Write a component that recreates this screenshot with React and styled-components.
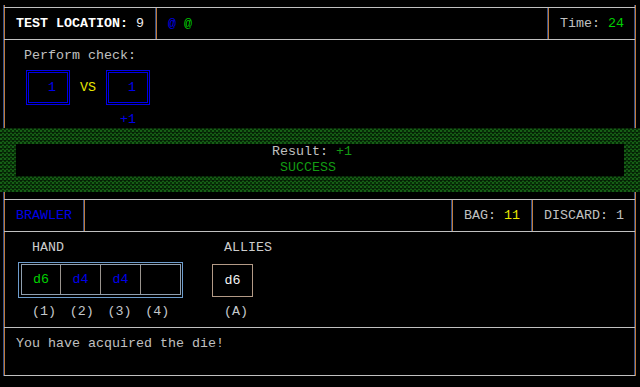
import React from "react";
import styled, { createGlobalStyle } from "styled-components";

const Global = createGlobalStyle`
  html, body { margin: 0; padding: 0; background: #000; }
  body { width: 640px; height: 387px; overflow: hidden; }
`;

const C = {
  text: "#c0c0c0",
  rule: "#c0c0c0",
  edgeBlue: "#2f4f88",
  edgeOrange: "#c07b3c",
  blue: "#0000e8",
  green: "#00d000",
  dimGreen: "#139a13",
  yellow: "#e8e800",
  white: "#f4f4f4",
};

const Screen = styled.div`
  width: 640px;
  height: 387px;
  background: #000;
  color: ${C.text};
  font-family: "Liberation Mono", "DejaVu Sans Mono", monospace;
  font-size: 13.333px;
  line-height: 16px;
  display: flex;
  flex-direction: column;
`;

const Frame = styled.section`
  margin: ${(p) => (p.$top ? "5px 4px 0 3px" : "0 4px 0 3px")};
  padding-top: ${(p) => (p.$top ? "2px" : "7px")};
  border-left: 1px solid ${C.edgeBlue};
  border-right: 1px solid ${C.edgeOrange};
  box-shadow: inset 1px 0 0 ${C.edgeOrange}, inset -1px 0 0 ${C.edgeBlue};
  display: flex;
  flex-direction: column;
`;

const Bar = styled.div`
  display: flex;
  height: 33px;
  box-sizing: border-box;
  border-top: 1px solid ${C.rule};
  border-bottom: 1px solid ${C.rule};
`;

const Cell = styled.div`
  display: flex;
  align-items: center;
  padding: 0 11px 0 12px;
  flex: ${(p) => (p.$grow ? 1 : "none")};
  white-space: pre;
  ${(p) =>
    p.$sep
      ? `border-left: 1px solid ${C.edgeBlue}; box-shadow: inset 1px 0 0 ${C.edgeOrange};`
      : ""}
`;

const Tint = styled.span`
  color: ${(p) => p.$c};
  font-weight: ${(p) => (p.$bold ? "bold" : "normal")};
`;

const CheckArea = styled.div`
  height: 88px;
  box-sizing: border-box;
  padding: 8px 0 0 20px;
  display: flex;
  flex-direction: column;
  gap: 6px;
`;

const CheckRow = styled.div`
  display: flex;
  align-items: flex-start;
  margin-left: 2px;
`;

const DieBox = styled.div`
  width: 44px;
  height: 35px;
  box-sizing: border-box;
  border: 3px double ${C.blue};
  color: ${C.blue};
  text-align: right;
  padding-right: 11px;
  line-height: 29px;
`;

const Versus = styled.div`
  margin: 0 10px;
  line-height: 35px;
  color: ${C.yellow};
`;

const Stack = styled.div`
  display: flex;
  flex-direction: column;
  gap: 7px;
`;

const Bonus = styled.div`
  text-align: right;
  padding-right: 14px;
  color: ${C.blue};
`;

const Band = styled.div`
  height: 64px;
  box-sizing: border-box;
  padding: 16px;
  background-color: #063006;
  background-image: repeating-linear-gradient(
      to bottom,
      rgba(0, 0, 0, 0.45) 0 1px,
      transparent 1px 4px
    ),
    conic-gradient(#165e16 25%, transparent 0 50%, #165e16 0 75%, transparent 0);
  background-size: auto, 4px 4px;
`;

const ResultBox = styled.div`
  height: 32px;
  background: #000;
  padding-right: 16px;
  text-align: center;
  white-space: pre;
`;

const Line = styled.div`
  height: 16px;
  color: ${(p) => p.$c || C.text};
`;

const Body = styled.div`
  height: 95px;
  box-sizing: border-box;
  padding: 8px 0 0 14px;
  display: grid;
  grid-template-columns: 165px 41px;
  grid-template-rows: 16px 36px 16px;
  column-gap: 29px;
  row-gap: 6px;
`;

const Label = styled.div`
  padding-left: ${(p) => p.$pad}px;
  color: #cccccc;
  white-space: pre;
`;

const HandFrame = styled.div`
  border: 1px solid #6d9ccc;
  padding: 1px 1px 2px 2px;
  display: flex;
`;

const Slots = styled.div`
  display: flex;
  flex: 1;
  border: 1px solid #8f9fb0;
  height: 31px;
  box-sizing: border-box;
`;

const Slot = styled.div`
  width: ${(p) => p.$w}px;
  box-sizing: border-box;
  border-right: ${(p) => (p.$last ? "none" : "1px solid #9a948e")};
  text-align: center;
  line-height: 29px;
  color: ${(p) => p.$c};
`;

const AllyBox = styled.div`
  align-self: center;
  height: 33px;
  box-sizing: border-box;
  border: 1px solid #b39a86;
  text-align: center;
  line-height: 31px;
  color: ${C.white};
`;

const Indexes = styled.div`
  display: flex;
  padding-left: ${(p) => p.$pad}px;
`;

const Index = styled.div`
  width: 40px;
  color: #c4c8cc;
`;

const Message = styled.div`
  height: 49px;
  box-sizing: border-box;
  border-top: 1px solid ${C.rule};
  border-bottom: 1px solid ${C.rule};
  padding: 8px 12px 0;
`;

const hand = [
  { v: "d6", c: C.green, w: 39 },
  { v: "d4", c: C.blue, w: 40 },
  { v: "d4", c: C.blue, w: 40 },
  { v: "", c: C.text, w: 39 },
];

export default function App() {
  return (
    <Screen>
      <Global />
      <Frame $top>
        <Bar>
          <Cell>
            <span>
              <Tint $c="#ffffff" $bold>TEST LOCATION:</Tint>
              <Tint $c="#f0f0f0"> 9</Tint>
            </span>
          </Cell>
          <Cell $sep $grow>
            <span>
              <Tint $c={C.blue}>@</Tint>
              {" "}
              <Tint $c="#00c800">@</Tint>
            </span>
          </Cell>
          <Cell $sep>
            <span>
              Time: <Tint $c={C.green}>24</Tint>
            </span>
          </Cell>
        </Bar>
        <CheckArea>
          <div>Perform check:</div>
          <CheckRow>
            <DieBox>1</DieBox>
            <Versus>VS</Versus>
            <Stack>
              <DieBox>1</DieBox>
              <Bonus>+1</Bonus>
            </Stack>
          </CheckRow>
        </CheckArea>
      </Frame>
      <Band>
        <ResultBox>
          <Line>
            Result: <Tint $c={C.dimGreen}>+1</Tint>
          </Line>
          <Line $c={C.dimGreen}>{"SUCCESS "}</Line>
        </ResultBox>
      </Band>
      <Frame>
        <Bar>
          <Cell>
            <Tint $c={C.blue}>BRAWLER</Tint>
          </Cell>
          <Cell $sep $grow />
          <Cell $sep>
            <span>
              BAG: <Tint $c={C.yellow}>11</Tint>
            </span>
          </Cell>
          <Cell $sep>DISCARD: 1</Cell>
        </Bar>
        <Body>
          <Label $pad={14}>HAND</Label>
          <Label $pad={12}>ALLIES</Label>
          <HandFrame>
            <Slots>
              {hand.map((s, i) => (
                <Slot key={i} $w={s.w} $c={s.c} $last={i === hand.length - 1}>
                  {s.v}
                </Slot>
              ))}
            </Slots>
          </HandFrame>
          <AllyBox>d6</AllyBox>
          <Indexes $pad={14}>
            {["(1)", "(2)", "(3)", "(4)"].map((t) => (
              <Index key={t}>{t}</Index>
            ))}
          </Indexes>
          <Indexes $pad={12}>
            <Index>(A)</Index>
          </Indexes>
        </Body>
        <Message>You have acquired the die!</Message>
      </Frame>
    </Screen>
  );
}
